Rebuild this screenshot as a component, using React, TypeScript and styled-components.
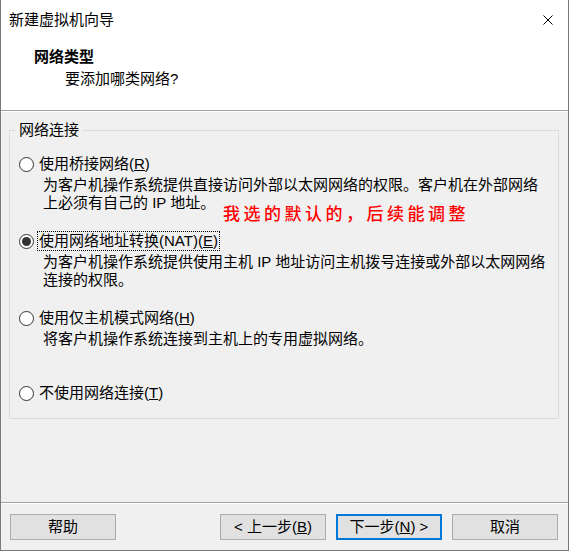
import React from 'react';
import styled, { createGlobalStyle } from 'styled-components';

const GlobalStyle = createGlobalStyle`
  body {
    margin: 0;
    background: #fff;
  }
`;

const Window = styled.div`
  width: 569px;
  height: 551px;
  box-sizing: border-box;
  border: 1px solid #7a7a7a;
  border-top: none;
  display: flex;
  flex-direction: column;
  background: #f0f0f0;
  color: #000;
  font-family: 'Liberation Sans', 'Noto Sans CJK SC', sans-serif;
  font-size: 15px;
`;

const Top = styled.div`
  height: 111px;
  box-sizing: border-box;
  background: #fff;
  border-bottom: 1px solid #a0a0a0;
`;

const TitleBar = styled.div`
  height: 40px;
  display: flex;
  align-items: center;
  justify-content: space-between;
  padding: 0 15px 0 8px;
  line-height: 20px;
`;

const CloseButton = styled.span`
  display: flex;
  width: 10px;
  height: 10px;
`;

const Header = styled.div`
  padding: 7px 0 0 33px;
`;

const Heading = styled.div`
  font-weight: bold;
  line-height: 20px;
`;

const SubHeading = styled.div`
  margin-top: 2px;
  padding-left: 31px;
  line-height: 20px;
`;

const Main = styled.div`
  flex: 1;
  box-shadow: inset 0 1px 0 #fff;
  padding: 9px 9px 0 8px;
`;

const Group = styled.fieldset`
  margin: 0;
  padding: 0;
  min-width: 0;
  height: 299px;
  box-sizing: border-box;
  border: 1px solid #dcdcdc;
`;

const Legend = styled.legend`
  margin-left: 6px;
  padding: 0 3px;
  line-height: 20px;
`;

const Options = styled.div`
  position: relative;
  padding: 14px 0 0 9px;
`;

const Option = styled.div<{ $height: number }>`
  height: ${p => p.$height}px;
`;

const RadioLine = styled.div`
  display: flex;
  align-items: center;
  height: 20px;
`;

const Radio = styled.span<{ $checked?: boolean }>`
  width: 15px;
  height: 15px;
  box-sizing: border-box;
  border: 1px solid #333;
  border-radius: 50%;
  background: #fff;
  display: flex;
  align-items: center;
  justify-content: center;
  flex: none;

  &::after {
    content: '';
    width: 9px;
    height: 9px;
    border-radius: 50%;
    background: ${p => (p.$checked ? '#333' : 'transparent')};
  }
`;

const Label = styled.span<{ $focused?: boolean }>`
  margin-left: 3px;
  padding: 0 1px;
  line-height: 18px;
  border: 1px dotted ${p => (p.$focused ? '#000' : 'transparent')};
  white-space: nowrap;
`;

const Key = styled.span`
  text-decoration: underline;
`;

const Desc = styled.div<{ $first?: boolean }>`
  margin-top: ${p => (p.$first ? 2 : 0)}px;
  padding-left: 24px;
  line-height: 18px;
  white-space: nowrap;
`;

const Note = styled.div`
  position: absolute;
  left: 213px;
  top: 64px;
  color: #ff0000;
  font-size: 17px;
  font-weight: 500;
  letter-spacing: 3.5px;
  line-height: 22px;
  white-space: nowrap;
`;

const Footer = styled.div`
  display: flex;
  justify-content: space-between;
  border-top: 1px solid #a0a0a0;
  box-shadow: inset 0 1px 0 #fff;
  padding: 11px 10px 10px 9px;
`;

const ButtonGroup = styled.div`
  display: flex;
  gap: 10px;
`;

const Button = styled.button<{ $default?: boolean }>`
  width: 106px;
  height: 26px;
  box-sizing: border-box;
  padding: 0;
  border: ${p => (p.$default ? '2px solid #0078d7' : '1px solid #adadad')};
  background: #e1e1e1;
  color: #000;
  font: inherit;
  line-height: 20px;
`;

const options = [
  {
    label: '使用桥接网络',
    key: 'R',
    height: 77,
    lines: [
      '为客户机操作系统提供直接访问外部以太网网络的权限。客户机在外部网络',
      '上必须有自己的 IP 地址。',
    ],
  },
  {
    label: '使用网络地址转换(NAT)',
    key: 'E',
    height: 77,
    checked: true,
    lines: [
      '为客户机操作系统提供使用主机 IP 地址访问主机拨号连接或外部以太网网络',
      '连接的权限。',
    ],
  },
  {
    label: '使用仅主机模式网络',
    key: 'H',
    height: 75,
    lines: ['将客户机操作系统连接到主机上的专用虚拟网络。'],
  },
  {
    label: '不使用网络连接',
    key: 'T',
    height: 20,
    lines: [],
  },
];

export default function App() {
  return (
    <Window>
      <GlobalStyle />
      <Top>
        <TitleBar>
          <span>新建虚拟机向导</span>
          <CloseButton>
            <svg width="10" height="10" viewBox="0 0 10 10">
              <path d="M0.5 0.5 L9.5 9.5 M9.5 0.5 L0.5 9.5" stroke="#000" strokeWidth="1" />
            </svg>
          </CloseButton>
        </TitleBar>
        <Header>
          <Heading>网络类型</Heading>
          <SubHeading>要添加哪类网络?</SubHeading>
        </Header>
      </Top>
      <Main>
        <Group>
          <Legend>网络连接</Legend>
          <Options>
            {options.map(({ label, key, height, checked, lines }) => (
              <Option key={key} $height={height}>
                <RadioLine>
                  <Radio $checked={checked} />
                  <Label $focused={checked}>
                    {label}(<Key>{key}</Key>)
                  </Label>
                </RadioLine>
                {lines.map((line, i) => (
                  <Desc key={i} $first={i === 0}>
                    {line}
                  </Desc>
                ))}
              </Option>
            ))}
            <Note>我选的默认的，后续能调整</Note>
          </Options>
        </Group>
      </Main>
      <Footer>
        <Button>帮助</Button>
        <ButtonGroup>
          <Button>
            &lt; 上一步(<Key>B</Key>)
          </Button>
          <Button $default>
            下一步(<Key>N</Key>) &gt;
          </Button>
          <Button>取消</Button>
        </ButtonGroup>
      </Footer>
    </Window>
  );
}
